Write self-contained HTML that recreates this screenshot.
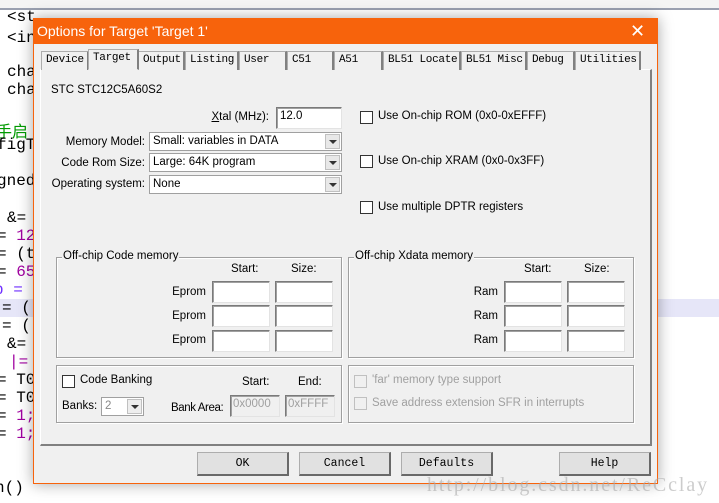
<!DOCTYPE html>
<html><head><meta charset="utf-8"><style>
*{box-sizing:border-box;margin:0;padding:0}
body{width:719px;height:503px;position:relative;overflow:hidden;background:#fff;font-family:"Liberation Sans",sans-serif;font-size:11.5px;color:#000}
.a{position:absolute;white-space:nowrap}
.code{position:absolute;font-family:"Liberation Mono","Noto Sans CJK SC",monospace;font-size:16px;white-space:pre;color:#000}
.dlg{position:absolute;left:33px;top:18px;width:625px;height:466px;background:#f0f0f0;border:1px solid #f7630c;box-shadow:0 0 14px rgba(0,0,0,.35)}
.tab{position:absolute;top:51px;height:19px;border:1px solid #adadad;border-bottom:none;background:#f0f0f0;font-family:"Liberation Mono",monospace;font-size:11px;letter-spacing:-0.3px;padding:2px 0 0 4px;border-right:2px solid #808080;white-space:nowrap;overflow:hidden}
.in{position:absolute;background:#fff;border:1px solid #7a7a7a;border-right-color:#e3e3e3;border-bottom-color:#e3e3e3;box-shadow:inset 1px 1px 0 #a0a0a0;white-space:nowrap}
.sel{position:absolute;background:#fff;border:1px solid #a0a0a0;height:19px;padding:2px 3px}
.sel .ar{position:absolute;right:1px;top:1px;width:15px;height:15px;background:#e8e8e8;border:1px solid #c0c0c0}
.sel .ar:after{content:"";position:absolute;left:3px;top:5px;border:4px solid transparent;border-top:4px solid #333}
.cb{position:absolute;width:13px;height:13px;background:#fff;border:1px solid #333}
.grp{position:absolute;border:1px solid #a0a0a0;box-shadow:1px 1px 0 #fff,inset 1px 1px 0 #fff}
.lg{position:absolute;background:#f0f0f0;padding:0 1px;top:-8px;left:5px;white-space:nowrap}
.btn{position:absolute;top:452px;width:92px;height:24px;background:#e1e1e1;border:1px solid #adadad;border-right:2px solid #696969;border-bottom:2px solid #696969;font-family:"Liberation Mono",monospace;font-size:11.5px;text-align:center;line-height:21px}
.r{text-align:right}
.g{color:#a0a0a0}
</style></head><body>
<div class="a" style="left:0;top:0;width:719px;height:10px;background:#f4f4f4;border-bottom:2px solid #9aa0b0"></div>
<div class="a" style="left:0;top:299px;width:719px;height:18px;background:#e6e6f8"></div>
<div class="code" style="left:7px;top:8px">&lt;st</div>
<div class="code" style="left:7px;top:29px">&lt;in</div>
<div class="code" style="left:7px;top:63px">cha</div>
<div class="code" style="left:7px;top:81px">cha</div>
<div class="code" style="left:-4px;top:118px;color:#009a00">手启</div>
<div class="code" style="left:-3px;top:136px">figT</div>
<div class="code" style="left:-3px;top:172px">gned</div>
<div class="code" style="left:7px;top:209px">&amp;=</div>
<div class="code" style="left:-3px;top:227px">= <span style="color:#a000a0">12</span></div>
<div class="code" style="left:-3px;top:245px">= (t</div>
<div class="code" style="left:-3px;top:263px">= <span style="color:#a000a0">65</span></div>
<div class="code" style="left:-6px;top:281px;color:#7030ff">p =</div>
<div class="code" style="left:2px;top:299px">= (</div>
<div class="code" style="left:2px;top:317px">= (</div>
<div class="code" style="left:7px;top:335px">&amp;=</div>
<div class="code" style="left:9px;top:353px;color:#a000a0">|=</div>
<div class="code" style="left:-3px;top:371px">= T0</div>
<div class="code" style="left:-3px;top:389px">= T0</div>
<div class="code" style="left:-3px;top:407px">= <span style="color:#a000a0">1;</span></div>
<div class="code" style="left:-3px;top:425px">= <span style="color:#a000a0">1;</span></div>
<div class="code" style="left:-5px;top:479px">n()</div>

<div class="dlg" style="left:33px;top:18px"></div>
<div class="a" style="left:33px;top:18px;width:625px;height:26px;background:#f7630c;color:#fff;font-size:14px;padding:5px 0 0 4px">Options for Target 'Target 1'</div>
<div class="a" style="left:630px;top:21px;color:#fff;font-size:18px">✕</div>

<div class="a" style="left:40px;top:69px;width:612px;height:377px;border:1px solid #fff;border-right:2px solid #808080;border-bottom:2px solid #808080"></div>
<div class="tab" style="left:41px;width:48px">Device</div>
<div class="tab" style="left:88px;width:51px;top:49px;height:21px;border-bottom:1px solid #f0f0f0;z-index:2">Target</div>
<div class="tab" style="left:138px;width:47px">Output</div>
<div class="tab" style="left:185px;width:54px">Listing</div>
<div class="tab" style="left:239px;width:48px">User</div>
<div class="tab" style="left:287px;width:47px">C51</div>
<div class="tab" style="left:334px;width:49px">A51</div>
<div class="tab" style="left:383px;width:78px">BL51 Locate</div>
<div class="tab" style="left:461px;width:66px">BL51 Misc</div>
<div class="tab" style="left:527px;width:48px">Debug</div>
<div class="tab" style="left:575px;width:66px">Utilities</div>

<div class="a" style="left:51px;top:84px">STC STC12C5A60S2</div>
<div class="a r" style="left:150px;width:119px;top:111px"><u>X</u>tal (MHz):</div>
<div class="in" style="left:276px;top:107px;width:66px;height:22px;padding:2px 3px">12.0</div>
<div class="a r" style="left:50px;width:95px;top:136px">Memory Model:</div>
<div class="a r" style="left:50px;width:95px;top:157px">Code Rom Size:</div>
<div class="a r" style="left:40px;width:105px;top:178px">Operating system:</div>
<div class="sel" style="left:149px;top:132px;width:193px">Small: variables in DATA<div class="ar"></div></div>
<div class="sel" style="left:149px;top:153px;width:193px">Large: 64K program<div class="ar"></div></div>
<div class="sel" style="left:149px;top:175px;width:193px">None<div class="ar"></div></div>

<div class="cb" style="left:360px;top:111px"></div><div class="a" style="left:378px;top:110px">Use On-chip ROM (0x0-0xEFFF)</div>
<div class="cb" style="left:360px;top:155px"></div><div class="a" style="left:378px;top:155px">Use On-chip XRAM (0x0-0x3FF)</div>
<div class="cb" style="left:360px;top:201px"></div><div class="a" style="left:378px;top:201px">Use multiple DPTR registers</div>

<div class="grp" style="left:56px;top:257px;width:286px;height:101px"><div class="lg">Off-chip Code memory</div></div>
<div class="a" style="left:231px;top:263px">Start:</div><div class="a" style="left:291px;top:263px">Size:</div>
<div class="a r" style="left:150px;width:56px;top:286px">Eprom</div>
<div class="a r" style="left:150px;width:56px;top:310px">Eprom</div>
<div class="a r" style="left:150px;width:56px;top:334px">Eprom</div>
<div class="in" style="left:212px;top:281px;width:58px;height:22px"></div><div class="in" style="left:275px;top:281px;width:58px;height:22px"></div>
<div class="in" style="left:212px;top:305px;width:58px;height:22px"></div><div class="in" style="left:275px;top:305px;width:58px;height:22px"></div>
<div class="in" style="left:212px;top:330px;width:58px;height:22px"></div><div class="in" style="left:275px;top:330px;width:58px;height:22px"></div>

<div class="grp" style="left:348px;top:257px;width:286px;height:101px"><div class="lg">Off-chip Xdata memory</div></div>
<div class="a" style="left:524px;top:263px">Start:</div><div class="a" style="left:584px;top:263px">Size:</div>
<div class="a r" style="left:450px;width:48px;top:286px">Ram</div>
<div class="a r" style="left:450px;width:48px;top:310px">Ram</div>
<div class="a r" style="left:450px;width:48px;top:334px">Ram</div>
<div class="in" style="left:504px;top:281px;width:58px;height:22px"></div><div class="in" style="left:567px;top:281px;width:58px;height:22px"></div>
<div class="in" style="left:504px;top:305px;width:58px;height:22px"></div><div class="in" style="left:567px;top:305px;width:58px;height:22px"></div>
<div class="in" style="left:504px;top:330px;width:58px;height:22px"></div><div class="in" style="left:567px;top:330px;width:58px;height:22px"></div>

<div class="grp" style="left:56px;top:365px;width:286px;height:58px"></div>
<div class="cb" style="left:62px;top:375px"></div><div class="a" style="left:80px;top:374px">Code Banking</div>
<div class="a" style="left:242px;top:376px">Start:</div><div class="a" style="left:298px;top:376px">End:</div>
<div class="a" style="left:62px;top:400px">Banks:</div>
<div class="sel" style="left:101px;top:397px;width:43px;color:#888">2<div class="ar" style="background:#eee"></div></div>
<div class="a" style="left:171px;top:402px;letter-spacing:-0.4px">Bank Area:</div>
<div class="in g" style="left:230px;top:395px;width:50px;height:22px;background:#f0f0f0;padding:2px 2px">0x0000</div>
<div class="in g" style="left:285px;top:395px;width:50px;height:22px;background:#f0f0f0;padding:2px 2px">0xFFFF</div>

<div class="grp" style="left:348px;top:365px;width:286px;height:58px"></div>
<div class="cb" style="left:354px;top:375px;border-color:#c0c0c0;background:#f0f0f0"></div><div class="a g" style="left:372px;top:374px">'far' memory type support</div>
<div class="cb" style="left:354px;top:397px;border-color:#c0c0c0;background:#f0f0f0"></div><div class="a g" style="left:372px;top:397px">Save address extension SFR in interrupts</div>

<div class="btn" style="left:197px">OK</div>
<div class="btn" style="left:299px">Cancel</div>
<div class="btn" style="left:401px">Defaults</div>
<div class="btn" style="left:559px">Help</div>

<div class="a" style="left:427px;top:474px;font-family:'Liberation Serif',serif;font-size:20px;color:rgba(170,170,170,.6);letter-spacing:1.9px">http://blog.csdn.net/ReCclay</div>
</body></html>
